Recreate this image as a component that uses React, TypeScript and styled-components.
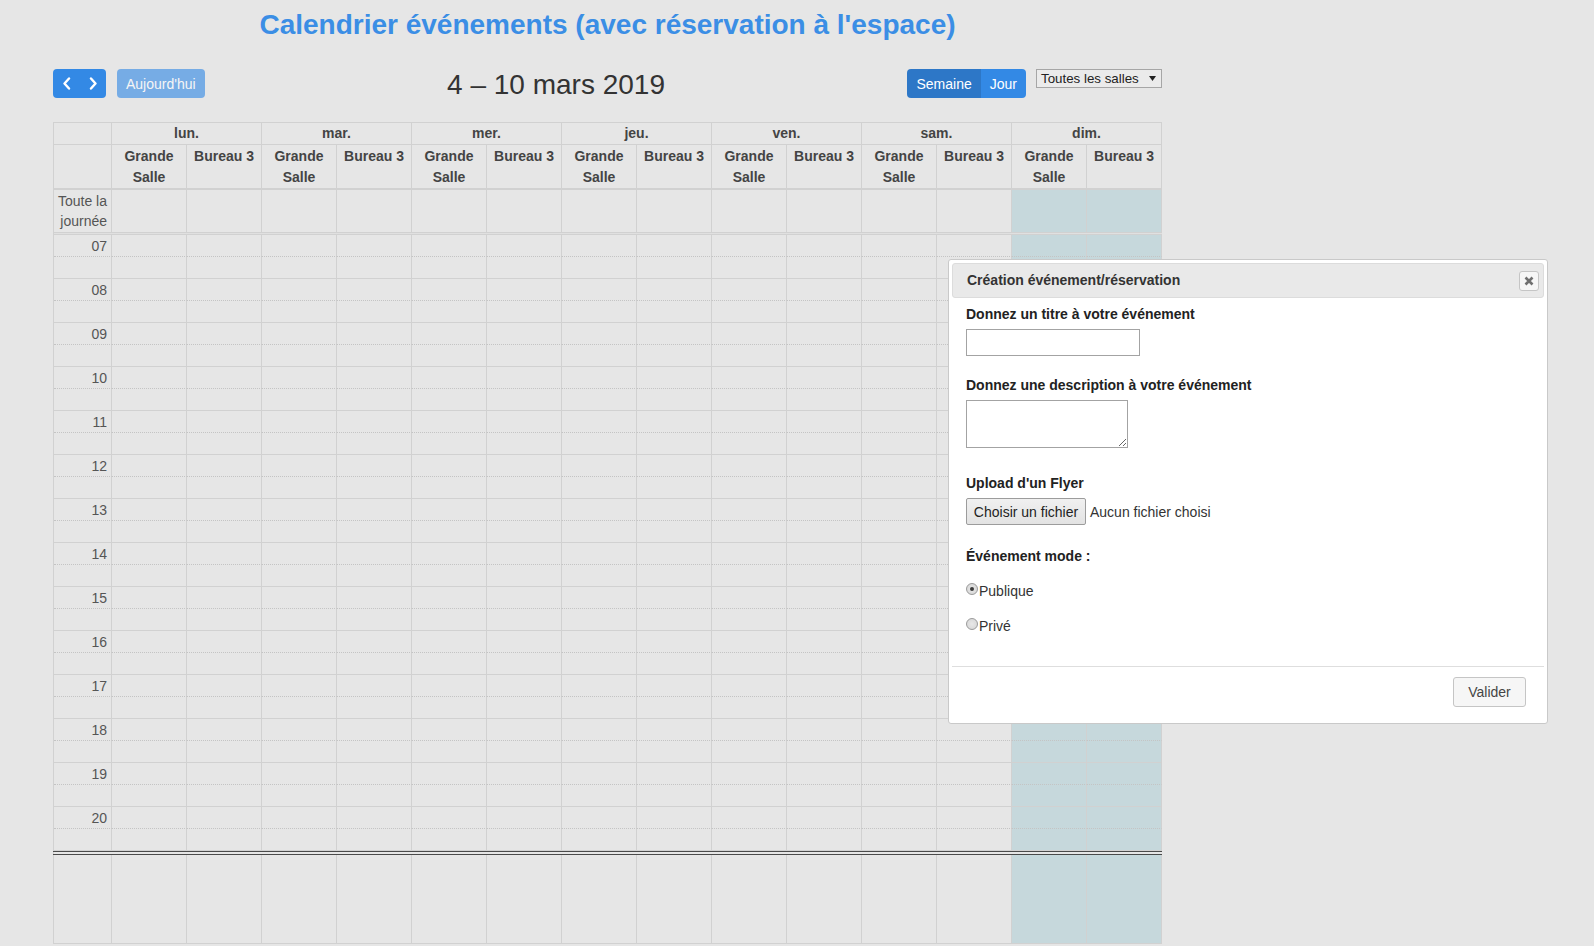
import React from 'react';
import styled, { createGlobalStyle } from 'styled-components';

const LINE = '#d1d1d1';
const TODAY_BG = '#c6d8dc';
const BLUE = '#3389e5';

const days = ['lun.', 'mar.', 'mer.', 'jeu.', 'ven.', 'sam.', 'dim.'];
const rooms = ['Grande Salle', 'Bureau 3'];
const hours = Array.from({ length: 14 }, (_, i) => String(i + 7).padStart(2, '0'));
const TODAY = 6;

const GlobalStyle = createGlobalStyle`
  html, body {
    margin: 0;
    padding: 0;
    background: #e6e6e6;
  }
  body {
    font-family: 'Liberation Sans', Arial, sans-serif;
    color: #333;
  }
`;

const Page = styled.div`
  position: relative;
  min-height: 946px;
  box-sizing: border-box;
  padding: 9px 0 0 53px;
`;

const Title = styled.h1`
  width: 1109px;
  margin: 0;
  font-size: 28px;
  line-height: 32px;
  font-weight: 700;
  color: #3b8ee5;
  text-align: center;
`;

const Toolbar = styled.div`
  width: 1109px;
  height: 32px;
  margin: 28px 0 21px;
  display: flex;
  justify-content: space-between;
  align-items: flex-start;
`;

const ToolChunk = styled.div<{ $gap?: number }>`
  display: flex;
  align-items: flex-start;
  gap: ${(p) => p.$gap || 11}px;
`;

const BtnGroup = styled.div`
  display: flex;
  border-radius: 4px;
  overflow: hidden;
`;

const ToolButton = styled.button<{ $active?: boolean; $disabled?: boolean; $w?: number }>`
  height: 29px;
  ${(p) => (p.$w ? `width: ${p.$w}px;` : '')}
  padding: 0 ${(p) => (p.$w ? 0 : 9)}px;
  border: none;
  margin: 0;
  display: flex;
  align-items: center;
  justify-content: center;
  font-family: 'Liberation Sans', Arial, sans-serif;
  font-size: 14px;
  color: #fff;
  background: ${(p) => (p.$active ? '#2d77c7' : BLUE)};
  opacity: ${(p) => (p.$disabled ? 0.62 : 1)};
  border-radius: ${(p) => (p.$disabled ? '4px' : '0')};
`;

const DateTitle = styled.h2`
  margin: 0;
  font-size: 28px;
  line-height: 32px;
  font-weight: 400;
  color: #333;
`;

const RoomSelect = styled.div`
  width: 126px;
  height: 19px;
  box-sizing: border-box;
  border: 1px solid #a6a6a6;
  background: #ebebeb;
  display: flex;
  align-items: center;
  justify-content: space-between;
  padding: 0 5px 0 4px;
  font-size: 13.33px;
  color: #222;
`;

const Calendar = styled.div`
  width: 1109px;
  box-sizing: border-box;
  border-left: 1px solid ${LINE};
  border-top: 1px solid ${LINE};
  font-size: 14px;
`;

const GridRow = styled.div`
  display: grid;
  grid-template-columns: 58px repeat(14, 75px);
`;

const HeadCell = styled.div<{ $span?: number; $h: number; $thick?: boolean }>`
  grid-column: span ${(p) => p.$span || 1};
  box-sizing: border-box;
  height: ${(p) => p.$h}px;
  padding-top: ${(p) => (p.$thick ? 1 : 0)}px;
  border-right: 1px solid ${LINE};
  border-bottom: ${(p) => (p.$thick ? 2 : 1)}px solid ${LINE};
  text-align: center;
  font-weight: 700;
  line-height: 21px;
  color: #444;
`;

const AxisCell = styled.div<{ $h: number; $dotted?: boolean }>`
  box-sizing: border-box;
  height: ${(p) => p.$h}px;
  border-right: 1px solid ${LINE};
  border-bottom: 1px ${(p) => (p.$dotted ? 'dotted #c4c4c4' : `solid ${LINE}`)};
  text-align: right;
  padding: 1px 4px 0 0;
  line-height: 20px;
  color: #555;
`;

const BodyCell = styled.div<{ $h: number; $today?: boolean; $dotted?: boolean }>`
  box-sizing: border-box;
  height: ${(p) => p.$h}px;
  border-right: 1px solid ${LINE};
  border-bottom: 1px ${(p) => (p.$dotted ? 'dotted #c4c4c4' : `solid ${LINE}`)};
  background: ${(p) => (p.$today ? TODAY_BG : 'transparent')};
`;

const Divider = styled.div`
  height: 1px;
  background: #e0e0e0;
  border-bottom: 1px solid ${LINE};
`;

const FillerRow = styled(GridRow)`
  border-top: 4px double #4a4a4a;
  margin-left: -1px;
  padding-left: 1px;
`;

/* dialog */

const Dialog = styled.div`
  position: absolute;
  left: 948px;
  top: 259px;
  width: 600px;
  height: 465px;
  box-sizing: border-box;
  padding: 3px;
  background: #fff;
  border: 1px solid #c9c9c9;
  border-radius: 3px;
  display: flex;
  flex-direction: column;
`;

const DialogHeader = styled.div`
  height: 35px;
  box-sizing: border-box;
  background: #e9e9e9;
  border: 1px solid #dcdcdc;
  border-radius: 3px;
  display: flex;
  align-items: center;
  justify-content: space-between;
  padding: 0 4px 1px 14px;
`;

const DialogTitle = styled.span`
  font-size: 14px;
  font-weight: 700;
  color: #333;
`;

const CloseButton = styled.button`
  width: 20px;
  height: 20px;
  box-sizing: border-box;
  padding: 0;
  margin-top: 2px;
  border: 1px solid #c5c5c5;
  border-radius: 3px;
  background: #f6f6f6;
  display: flex;
  align-items: center;
  justify-content: center;
`;

const DialogBody = styled.div`
  flex: 1;
  padding: 8px 14px 0;
  display: flex;
  flex-direction: column;
  align-items: flex-start;
`;

const FieldLabel = styled.div<{ $mt?: number }>`
  margin-top: ${(p) => p.$mt || 0}px;
  font-size: 14px;
  line-height: 16px;
  font-weight: 700;
  color: #222;
`;

const TextInput = styled.input`
  margin-top: 7px;
  width: 174px;
  height: 27px;
  box-sizing: border-box;
  border: 1px solid #a3a3a3;
  background: #fff;
  padding: 2px 4px;
`;

const TextArea = styled.textarea`
  margin-top: 7px;
  width: 162px;
  height: 48px;
  box-sizing: border-box;
  border: 1px solid #a3a3a3;
  background: #fff;
`;

const FileRow = styled.div`
  margin-top: 7px;
  display: flex;
  align-items: center;
  gap: 4px;
  font-size: 14px;
  color: #333;
`;

const FileButton = styled.button`
  height: 27px;
  width: 120px;
  box-sizing: border-box;
  padding: 0;
  border: 1px solid #9c9c9c;
  border-radius: 2px;
  background: linear-gradient(#f0f0f0, #e3e3e3);
  font-family: 'Liberation Sans', Arial, sans-serif;
  font-size: 14px;
  color: #222;
`;

const RadioRow = styled.label<{ $mt: number }>`
  margin-top: ${(p) => p.$mt}px;
  display: flex;
  align-items: flex-start;
  gap: 1px;
  font-size: 14px;
  line-height: 16px;
  color: #333;
`;

const RadioDot = styled.span<{ $checked?: boolean }>`
  width: 12px;
  height: 12px;
  box-sizing: border-box;
  border-radius: 50%;
  border: 1px solid #9a9a9a;
  background: radial-gradient(circle, #e8e8e8 0%, #d4d4d4 100%);
  display: flex;
  align-items: center;
  justify-content: center;
  &::after {
    content: '';
    width: 4px;
    height: 4px;
    border-radius: 50%;
    background: ${(p) => (p.$checked ? '#3a3a3a' : 'transparent')};
  }
`;

const DialogFooter = styled.div`
  border-top: 1px solid #dedede;
  padding: 10px 18px 13px 0;
  display: flex;
  justify-content: flex-end;
`;

const FooterButton = styled.button`
  height: 30px;
  width: 73px;
  box-sizing: border-box;
  border: 1px solid #c5c5c5;
  border-radius: 3px;
  background: #f6f6f6;
  font-family: 'Liberation Sans', Arial, sans-serif;
  font-size: 14px;
  color: #454545;
`;

const Chevron = ({ dir }: { dir: 'left' | 'right' }) => (
  <svg width="10" height="13" viewBox="0 0 10 13">
    <path
      d={dir === 'left' ? 'M7 1.5 L2.5 6.5 L7 11.5' : 'M3 1.5 L7.5 6.5 L3 11.5'}
      fill="none"
      stroke="#fff"
      strokeWidth="2.4"
      strokeLinecap="round"
      strokeLinejoin="round"
    />
  </svg>
);

const cols = Array.from({ length: 14 }, (_, i) => i);
const isToday = (c: number) => Math.floor(c / 2) === TODAY;

export default function App() {
  return (
    <>
      <GlobalStyle />
      <Page>
        <Title>Calendrier événements (avec réservation à l'espace)</Title>

        <Toolbar>
          <ToolChunk>
            <BtnGroup>
              <ToolButton $w={27}>
                <Chevron dir="left" />
              </ToolButton>
              <ToolButton $w={26}>
                <Chevron dir="right" />
              </ToolButton>
            </BtnGroup>
            <ToolButton $disabled>Aujourd'hui</ToolButton>
          </ToolChunk>
          <DateTitle>4 – 10 mars 2019</DateTitle>
          <ToolChunk $gap={10}>
            <BtnGroup>
              <ToolButton $active>Semaine</ToolButton>
              <ToolButton>Jour</ToolButton>
            </BtnGroup>
            <RoomSelect>
              <span>Toutes les salles</span>
              <svg width="7" height="5" viewBox="0 0 7 5">
                <path d="M0 0 L7 0 L3.5 5 Z" fill="#222" />
              </svg>
            </RoomSelect>
          </ToolChunk>
        </Toolbar>

        <Calendar>
          <GridRow>
            <HeadCell $h={22} />
            {days.map((d) => (
              <HeadCell key={d} $h={22} $span={2}>
                {d}
              </HeadCell>
            ))}
          </GridRow>
          <GridRow>
            <HeadCell $h={45} $thick />
            {cols.map((c) => (
              <HeadCell key={c} $h={45} $thick>
                {rooms[c % 2]}
              </HeadCell>
            ))}
          </GridRow>
          <GridRow>
            <AxisCell $h={43}>Toute la journée</AxisCell>
            {cols.map((c) => (
              <BodyCell key={c} $h={43} $today={isToday(c)} />
            ))}
          </GridRow>
          <Divider />
          {hours.map((h) => (
            <React.Fragment key={h}>
              <GridRow>
                <AxisCell $h={22} $dotted>
                  {h}
                </AxisCell>
                {cols.map((c) => (
                  <BodyCell key={c} $h={22} $dotted $today={isToday(c)} />
                ))}
              </GridRow>
              <GridRow>
                <AxisCell $h={22} />
                {cols.map((c) => (
                  <BodyCell key={c} $h={22} $today={isToday(c)} />
                ))}
              </GridRow>
            </React.Fragment>
          ))}
          <FillerRow>
            <AxisCell $h={89} />
            {cols.map((c) => (
              <BodyCell key={c} $h={89} $today={isToday(c)} />
            ))}
          </FillerRow>
        </Calendar>

        <Dialog>
          <DialogHeader>
            <DialogTitle>Création événement/réservation</DialogTitle>
            <CloseButton>
              <svg width="10" height="10" viewBox="0 0 10 10">
                <path d="M1.5 1.5 L8.5 8.5 M8.5 1.5 L1.5 8.5" stroke="#6f6f6f" strokeWidth="2.6" />
              </svg>
            </CloseButton>
          </DialogHeader>
          <DialogBody>
            <FieldLabel>Donnez un titre à votre événement</FieldLabel>
            <TextInput type="text" />
            <FieldLabel $mt={21}>Donnez une description à votre événement</FieldLabel>
            <TextArea />
            <FieldLabel $mt={27}>Upload d'un Flyer</FieldLabel>
            <FileRow>
              <FileButton>Choisir un fichier</FileButton>
              <span>Aucun fichier choisi</span>
            </FileRow>
            <FieldLabel $mt={23}>Événement mode :</FieldLabel>
            <RadioRow $mt={19}>
              <RadioDot $checked />
              Publique
            </RadioRow>
            <RadioRow $mt={19}>
              <RadioDot />
              Privé
            </RadioRow>
          </DialogBody>
          <DialogFooter>
            <FooterButton>Valider</FooterButton>
          </DialogFooter>
        </Dialog>
      </Page>
    </>
  );
}
